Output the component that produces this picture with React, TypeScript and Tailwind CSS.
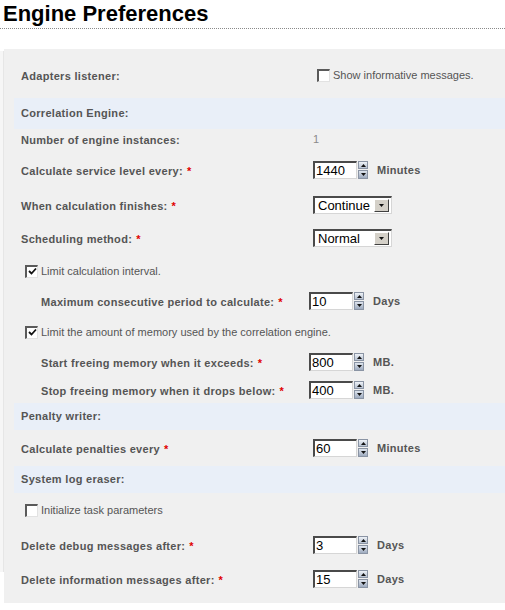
import type { ReactNode } from 'react'

function Req() {
  return <span className="ml-[4px] font-bold text-[#e00000]">*</span>
}

function Label({ children, req }: { children: ReactNode; req?: boolean }) {
  return (
    <span className="text-[11px] font-bold tracking-[0.3px] text-[#555555] whitespace-nowrap">
      {children}
      {req && <Req />}
    </span>
  )
}

function Unit({ children }: { children: ReactNode }) {
  return <span className="ml-[9px] text-[11px] font-bold tracking-[0.3px] text-[#555555]">{children}</span>
}

function Arrow({ up }: { up?: boolean }) {
  return (
    <svg width="5" height="3" viewBox="0 0 5 3" className="block">
      <polygon points={up ? '2.5,0 5,3 0,3' : '0,0 5,0 2.5,3'} fill="#111" />
    </svg>
  )
}

function Spinner() {
  return (
    <div className="ml-[1px] flex h-[18px] w-[10px] flex-col gap-[1px]">
      <div className="flex h-[8px] items-center justify-center border border-[#8a94a4] bg-gradient-to-b from-[#eef2f7] to-[#b7c2d2]">
        <Arrow up />
      </div>
      <div className="flex h-[9px] items-center justify-center border border-[#8a94a4] bg-gradient-to-b from-[#dfe5ee] to-[#9eabbf]">
        <Arrow />
      </div>
    </div>
  )
}

function NumberField({ value, unit }: { value: string; unit: string }) {
  return (
    <div className="flex items-center">
      <div className="flex h-[18px] w-[44px] items-center border-t-2 border-l-2 border-b border-r border-t-[#4a4a4a] border-l-[#4a4a4a] border-b-[#d6d6d6] border-r-[#d6d6d6] bg-white pl-[1px] text-[13px] text-black">
        {value}
      </div>
      <Spinner />
      <Unit>{unit}</Unit>
    </div>
  )
}

function Select({ value }: { value: string }) {
  return (
    <div className="flex h-[18px] w-[79px] items-center justify-between border-t-2 border-l-2 border-b border-r border-t-[#4a4a4a] border-l-[#4a4a4a] border-b-[#d6d6d6] border-r-[#d6d6d6] bg-white pl-[3px] pr-[2px] text-[13px] text-black">
      <span>{value}</span>
      <div className="flex h-[13px] w-[15px] items-center justify-center border border-t-white border-l-white border-b-[#404040] border-r-[#404040] bg-[#d4d0c8]">
        <Arrow />
      </div>
    </div>
  )
}

function Box({ checked }: { checked?: boolean }) {
  return (
    <div className="flex h-[13px] w-[13px] shrink-0 items-center justify-center border-t-2 border-l-2 border-b border-r border-t-[#5a5a5a] border-l-[#5a5a5a] border-b-[#e2e2e2] border-r-[#e2e2e2] bg-white">
      {checked && (
        <svg width="9" height="9" viewBox="0 0 9 9">
          <path d="M1 4 L3.5 6.5 L8 1.5" stroke="#111" strokeWidth="1.8" fill="none" />
        </svg>
      )}
    </div>
  )
}

function CheckText({ checked, children }: { checked?: boolean; children: ReactNode }) {
  return (
    <div className="flex items-center gap-[3px]">
      <Box checked={checked} />
      <span className="text-[11px] text-[#555555] whitespace-nowrap">{children}</span>
    </div>
  )
}

// className carries both the height and the top margin of the band
function Band({ title, className }: { title: string; className: string }) {
  return (
    <div className={`flex items-center bg-[#e9eff8] pl-[7px] ${className}`}>
      <Label>{title}</Label>
    </div>
  )
}

function Row({ label, req, control, className, indent }: {
  label: string
  req?: boolean
  control: ReactNode
  className: string
  indent?: boolean
}) {
  return (
    <div className={`flex h-[20px] items-center ${indent ? 'pl-[27px]' : 'pl-[7px]'} ${className}`}>
      <div className={indent ? 'w-[268px]' : 'w-[292px]'}>
        <Label req={req}>{label}</Label>
      </div>
      {control}
    </div>
  )
}

export default function App() {
  return (
    <div className="min-h-[610px] w-[505px] bg-white font-['Liberation_Sans',Arial,sans-serif]">
      <div className="h-[29px] border-b border-dotted border-[#8a8a8a] pl-[3px]">
        <h1 className="text-[22px] font-bold leading-[27px] text-black">Engine Preferences</h1>
      </div>

      <div className="mt-[20px] flex">
        <div className="mt-[2px] h-[521px] w-[4px] border-r border-[#e6e6e6] bg-[#f6f6f6]" />
        <div className="flex-1 bg-[#f0f0f0] pt-[16px] pb-[14px] pl-[10px]">
          <Row
            className=""
            label="Adapters listener:"
            control={
              <div className="pl-[4px]">
                <CheckText>Show informative messages.</CheckText>
              </div>
            }
          />

          <Band className="mt-[13px] h-[31px]" title="Correlation Engine:" />

          <Row
            className=""
            label="Number of engine instances:"
            control={<span className="text-[11px] text-[#8a8a8a]">1</span>}
          />
          <Row className="mt-[11px]" label="Calculate service level every:" req control={<NumberField value="1440" unit="Minutes" />} />
          <Row className="mt-[15px]" label="When calculation finishes:" req control={<Select value="Continue" />} />
          <Row className="mt-[13px]" label="Scheduling method:" req control={<Select value="Normal" />} />

          <div className="mt-[13px] flex h-[20px] items-center pl-[11px]">
            <CheckText checked>Limit calculation interval.</CheckText>
          </div>
          <Row
            className="mt-[10px]"
            indent
            label="Maximum consecutive period to calculate:"
            req
            control={<NumberField value="10" unit="Days" />}
          />

          <div className="mt-[11px] flex h-[20px] items-center pl-[11px]">
            <CheckText checked>Limit the amount of memory used by the correlation engine.</CheckText>
          </div>
          <Row
            className="mt-[10px]"
            indent
            label="Start freeing memory when it exceeds:"
            req
            control={<NumberField value="800" unit="MB." />}
          />
          <Row
            className="mt-[8px]"
            indent
            label="Stop freeing memory when it drops below:"
            req
            control={<NumberField value="400" unit="MB." />}
          />

          <Band className="mt-[3px] h-[27px]" title="Penalty writer:" />
          <Row className="mt-[8px]" label="Calculate penalties every" req control={<NumberField value="60" unit="Minutes" />} />

          <Band className="mt-[8px] h-[27px]" title="System log eraser:" />
          <div className="mt-[7px] flex h-[20px] items-center pl-[11px]">
            <CheckText>Initialize task parameters</CheckText>
          </div>
          <Row className="mt-[15px]" label="Delete debug messages after:" req control={<NumberField value="3" unit="Days" />} />
          <Row className="mt-[14px]" label="Delete information messages after:" req control={<NumberField value="15" unit="Days" />} />
        </div>
      </div>
    </div>
  )
}
